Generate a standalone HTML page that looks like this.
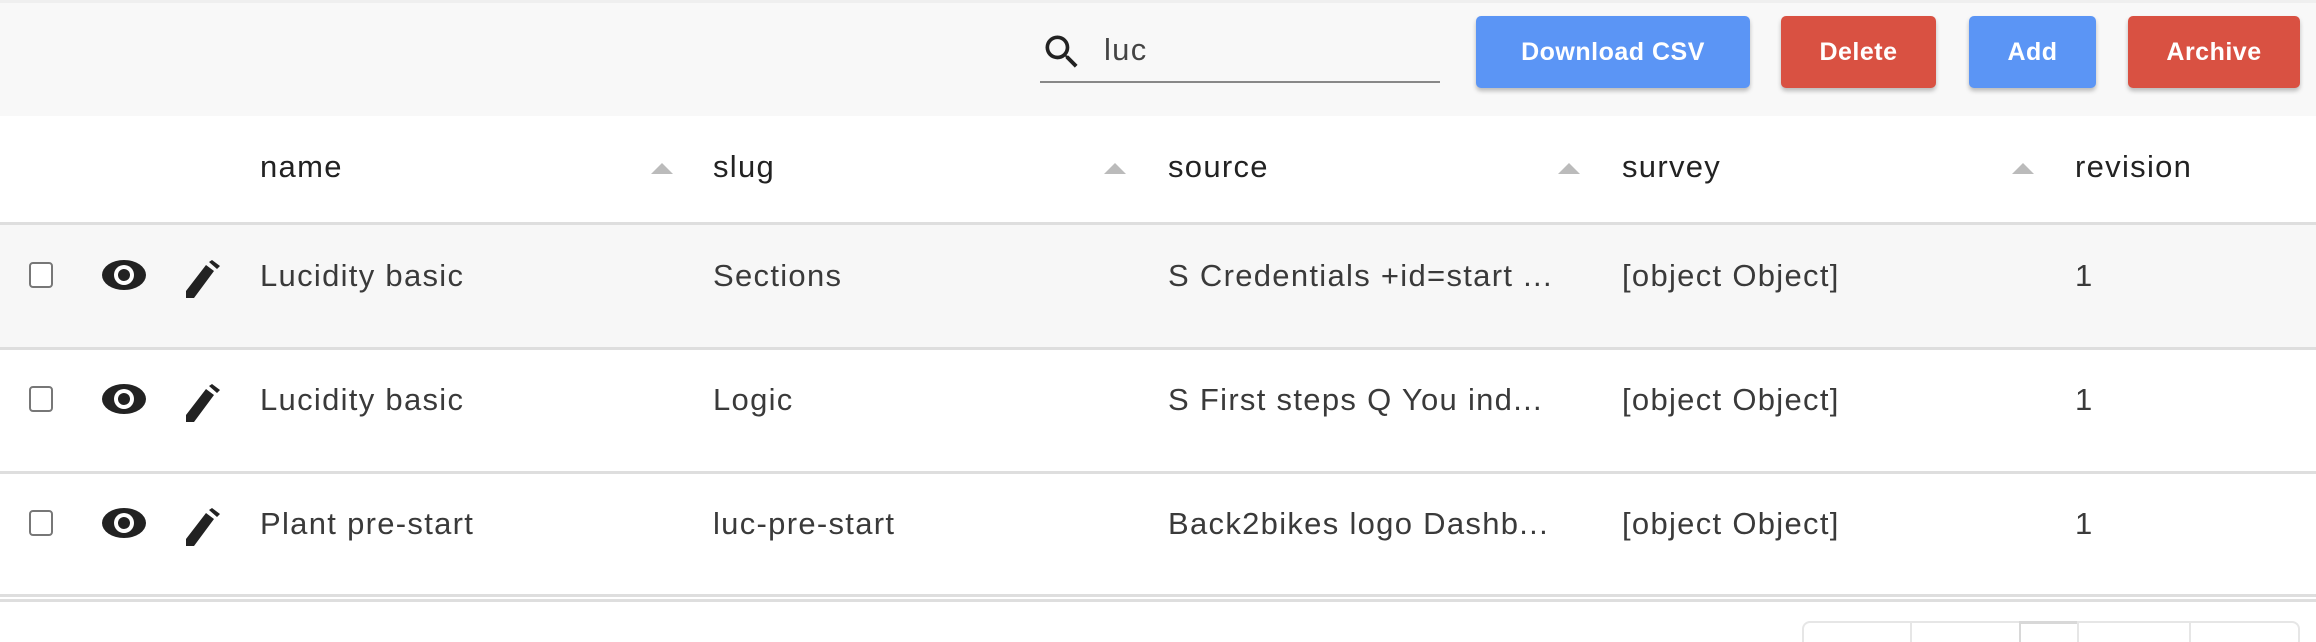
<!DOCTYPE html>
<html><head><meta charset="utf-8"><style>
*{margin:0;padding:0;box-sizing:border-box}
html{overflow:hidden;width:2316px;height:642px}
body{width:2316px;height:642px;background:#fff;font-family:"Liberation Sans",sans-serif;position:relative;overflow:hidden;color:#2a2a2a}
.a{position:absolute}
.bar{left:0;top:0;width:2316px;height:116px;background:#f8f8f8;border-top:3px solid #efefef}
.btn{top:16px;height:72px;border-radius:5px;color:#fff;font-size:25px;font-weight:bold;letter-spacing:0.5px;display:flex;align-items:center;justify-content:center;box-shadow:0 3px 4px rgba(0,0,0,.25)}
.blue{background:#5b95f5}.red{background:#d95142}
.t{font-size:31px;line-height:40px;white-space:nowrap;color:#3a3a3a;letter-spacing:1.3px}
.h{top:147px;color:#222}
.arr{width:0;height:0;border-left:11px solid transparent;border-right:11px solid transparent;border-bottom:11px solid #bbb;top:163px}
.line{left:0;width:2316px;height:3px;background:#dedede}
.cb{width:24px;height:26px;border:2px solid #777;border-radius:4px;left:29px;background:#fff}
</style></head><body>
<div class="a bar"></div>
<svg class="a" style="left:1040px;top:30px" width="44" height="44" viewBox="0 0 24 24"><path fill="#222" d="M15.5 14h-.79l-.28-.27A6.47 6.47 0 0 0 16 9.5 6.5 6.5 0 1 0 9.5 16c1.61 0 3.09-.59 4.23-1.57l.27.28v.79l5 4.99L20.49 19l-4.99-5zm-6 0C7.01 14 5 11.99 5 9.5S7.01 5 9.5 5 14 7.01 14 9.5 11.99 14 9.5 14z"/></svg>
<div class="a t" style="left:1104px;top:30px;color:#444">luc</div>
<div class="a" style="left:1040px;top:81px;width:400px;height:2px;background:#888"></div>
<div class="a btn blue" style="left:1476px;width:274px">Download CSV</div>
<div class="a btn red" style="left:1781px;width:155px">Delete</div>
<div class="a btn blue" style="left:1969px;width:127px">Add</div>
<div class="a btn red" style="left:2128px;width:172px">Archive</div>

<div class="a t h" style="left:260px">name</div><div class="a arr" style="left:651px"></div>
<div class="a t h" style="left:713px">slug</div><div class="a arr" style="left:1104px"></div>
<div class="a t h" style="left:1168px">source</div><div class="a arr" style="left:1558px"></div>
<div class="a t h" style="left:1622px">survey</div><div class="a arr" style="left:2012px"></div>
<div class="a t h" style="left:2075px">revision</div>

<div class="a line" style="top:222px"></div>
<div class="a" style="left:0;top:225px;width:2316px;height:122px;background:#f7f7f7"></div>
<div class="a line" style="top:347px"></div>
<div class="a line" style="top:471px"></div>
<div class="a line" style="top:594px"></div>
<div class="a line" style="top:599px"></div>

<div class="a cb" style="top:262px"></div>
<div class="a cb" style="top:386px"></div>
<div class="a cb" style="top:510px"></div>

<svg class="a" style="left:102px;top:259px" width="44" height="32" viewBox="0 0 44 32"><ellipse cx="22" cy="16" rx="22" ry="15" fill="#222"/><circle cx="22" cy="16" r="10" fill="#fff"/><circle cx="22" cy="16" r="6" fill="#222"/></svg>
<svg class="a" style="left:102px;top:383px" width="44" height="32" viewBox="0 0 44 32"><ellipse cx="22" cy="16" rx="22" ry="15" fill="#222"/><circle cx="22" cy="16" r="10" fill="#fff"/><circle cx="22" cy="16" r="6" fill="#222"/></svg>
<svg class="a" style="left:102px;top:507px" width="44" height="32" viewBox="0 0 44 32"><ellipse cx="22" cy="16" rx="22" ry="15" fill="#222"/><circle cx="22" cy="16" r="10" fill="#fff"/><circle cx="22" cy="16" r="6" fill="#222"/></svg>

<svg class="a" style="left:186px;top:260px" width="38" height="38" viewBox="0 0 38 38"><path fill="#222" d="M0 38V31L20 5l8 6L8 38z M23 2l3-2 8 6-3 3z"/></svg>
<svg class="a" style="left:186px;top:384px" width="38" height="38" viewBox="0 0 38 38"><path fill="#222" d="M0 38V31L20 5l8 6L8 38z M23 2l3-2 8 6-3 3z"/></svg>
<svg class="a" style="left:186px;top:508px" width="38" height="38" viewBox="0 0 38 38"><path fill="#222" d="M0 38V31L20 5l8 6L8 38z M23 2l3-2 8 6-3 3z"/></svg>

<div class="a t" style="left:260px;top:256px">Lucidity basic</div>
<div class="a t" style="left:713px;top:256px">Sections</div>
<div class="a t" style="left:1168px;top:256px">S Credentials +id=start ...</div>
<div class="a t" style="left:1622px;top:256px">[object Object]</div>
<div class="a t" style="left:2075px;top:256px">1</div>

<div class="a t" style="left:260px;top:380px">Lucidity basic</div>
<div class="a t" style="left:713px;top:380px">Logic</div>
<div class="a t" style="left:1168px;top:380px">S First steps Q You ind...</div>
<div class="a t" style="left:1622px;top:380px">[object Object]</div>
<div class="a t" style="left:2075px;top:380px">1</div>

<div class="a t" style="left:260px;top:504px">Plant pre-start</div>
<div class="a t" style="left:713px;top:504px">luc-pre-start</div>
<div class="a t" style="left:1168px;top:504px">Back2bikes logo Dashb...</div>
<div class="a t" style="left:1622px;top:504px">[object Object]</div>
<div class="a t" style="left:2075px;top:504px">1</div>

<div class="a" style="left:1802px;top:621px;width:498px;height:21px;border:2px solid #e6e6e6;border-bottom:none;border-radius:8px 8px 0 0"></div>
<div class="a" style="left:1910px;top:621px;width:2px;height:21px;background:#e6e6e6"></div>
<div class="a" style="left:2019px;top:621px;width:2px;height:21px;background:#d8d8d8"></div>
<div class="a" style="left:2019px;top:621px;width:58px;height:3px;background:#d8d8d8"></div>
<div class="a" style="left:2077px;top:621px;width:2px;height:21px;background:#e6e6e6"></div>
<div class="a" style="left:2189px;top:621px;width:2px;height:21px;background:#e6e6e6"></div>
</body></html>
